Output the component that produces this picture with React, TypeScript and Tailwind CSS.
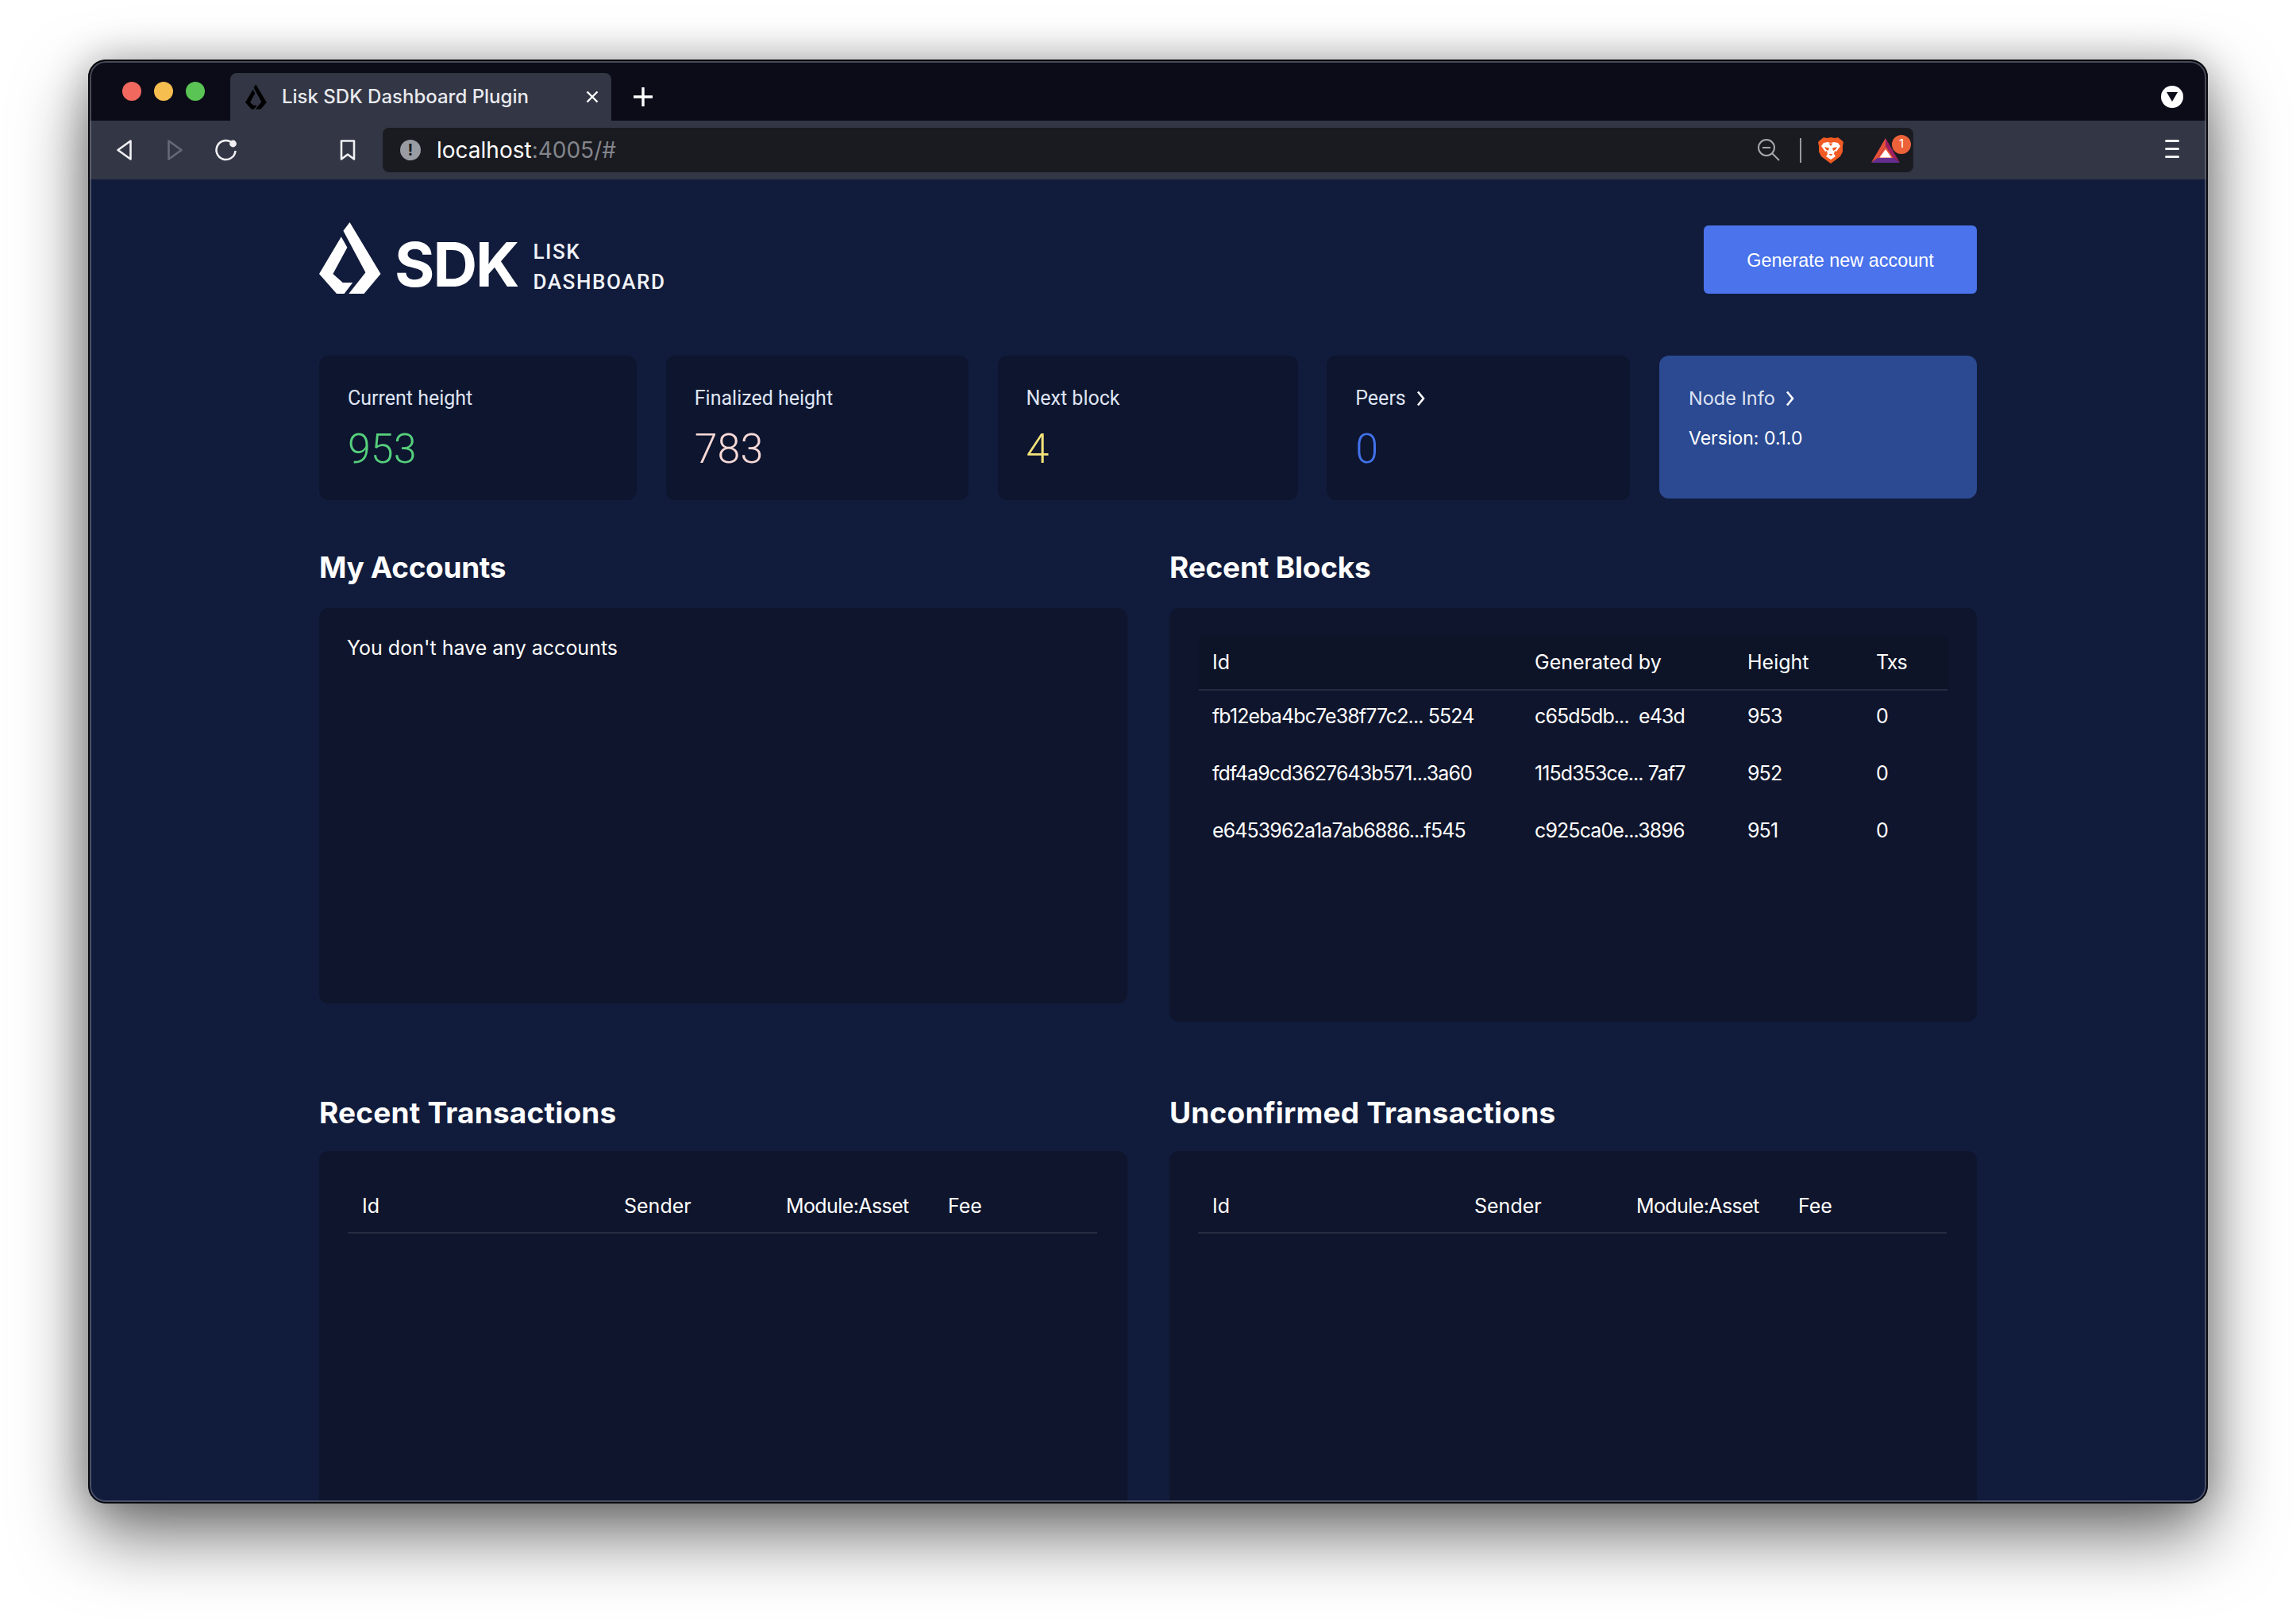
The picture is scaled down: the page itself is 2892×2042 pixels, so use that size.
import React from "react";

const blocks = [
  { id: "fb12eba4bc7e38f77c2... 5524", by: "c65d5db...  e43d", height: "953", txs: "0" },
  { id: "fdf4a9cd3627643b571...3a60", by: "115d353ce... 7af7", height: "952", txs: "0" },
  { id: "e6453962a1a7ab6886...f545", by: "c925ca0e...3896", height: "951", txs: "0" },
];

function LiskMark({ className, fill }: { className: string; fill: string }) {
  return (
    <svg viewBox="0 0 78 90" className={className} fill={fill}>
      <path d="M38.5 0L30.4 10.7L58.4 63.3L37.3 90H56.5L77.5 65Z" />
      <path d="M27.8 18.3L35.4 31.7L17.4 65L29.7 76H42.3L31.6 90H22L0 65Z" />
    </svg>
  );
}

function Chevron() {
  return (
    <svg viewBox="0 0 11 20" className="ml-[13px] h-[20px] w-[11px]" fill="none" stroke="#ffffff" strokeWidth="2.6">
      <path d="M2 1.5L9 10L2 18.5" />
    </svg>
  );
}

function StatCard({ label, value, color, width, arrow }: { label: string; value: string; color: string; width: string; arrow?: boolean }) {
  return (
    <div className={`h-[182px] rounded-[12px] bg-[#0d152f] pl-[36px] pt-[36px] ${width}`}>
      <div className="flex h-[36px] items-center font-['Roboto',sans-serif] text-[25px] text-[#dfe4f3]">
        {label}
        {arrow && <Chevron />}
      </div>
      <div className={`mt-[14px] font-['Roboto',sans-serif] text-[52px] font-light leading-[64px] ${color}`}>{value}</div>
    </div>
  );
}

function TxPanel({ title }: { title: string }) {
  return (
    <div>
      <h2 className="h-[50px] text-[37px] font-bold leading-[50px] tracking-[0.2px] text-white">{title}</h2>
      <div className="mt-[23px] h-[500px] rounded-[12px] bg-[#0f152c] pl-[36px] pr-[38px] pt-[37px]">
        <div className="grid h-[67px] grid-cols-[330px_204px_204px_1fr] items-center border-b-2 border-[#262c40] pl-[18px] text-[25px] text-white">
          <span>Id</span>
          <span>Sender</span>
          <span className="tracking-[-0.6px]">Module:Asset</span>
          <span>Fee</span>
        </div>
      </div>
    </div>
  );
}

export default function App() {
  return (
    <div className="h-[2042px] w-[2892px] overflow-hidden bg-white pl-[111px] pt-[75px] font-['Inter',sans-serif]">
      <div className="relative flex h-[1819px] w-[2670px] flex-col overflow-hidden rounded-[22px] shadow-[0_40px_90px_rgba(0,0,0,0.55),0_0_50px_rgba(0,0,0,0.25)]">
        {/* tab strip */}
        <div className="flex h-[77px] shrink-0 items-end bg-[#0b0c17] pl-[43px]">
          <div className="mb-[25px] flex gap-[16px]">
            <span className="h-[24px] w-[24px] rounded-full bg-[#f1685e]" />
            <span className="h-[24px] w-[24px] rounded-full bg-[#f6bd4f]" />
            <span className="h-[24px] w-[24px] rounded-full bg-[#5ac454]" />
          </div>
          <div className="ml-[32px] flex h-[60px] w-[480px] items-center rounded-t-[8px] bg-[#323645] pl-[19px] pr-[16px]">
            <LiskMark className="h-[32px] w-[27px]" fill="#000000" />
            <span className="ml-[19px] text-[24px] font-medium text-[#e9eaee]">Lisk SDK Dashboard Plugin</span>
            <svg viewBox="0 0 16 16" className="ml-auto h-[16px] w-[16px]" stroke="#ffffff" strokeWidth="2.4">
              <path d="M1.5 1.5L14.5 14.5M14.5 1.5L1.5 14.5" />
            </svg>
          </div>
          <svg viewBox="0 0 24 24" className="mb-[18px] ml-[28px] h-[24px] w-[24px]" stroke="#ffffff" strokeWidth="3.4">
            <path d="M12 0V24M0 12H24" />
          </svg>
          <div className="mb-[16px] ml-auto mr-[31px] flex h-[28px] w-[28px] items-center justify-center rounded-full bg-white">
            <svg viewBox="0 0 14 12" className="h-[12px] w-[14px]" fill="#0b0c17">
              <path d="M0 0H14L7 12Z" />
            </svg>
          </div>
        </div>

        {/* toolbar */}
        <div className="flex h-[74px] shrink-0 items-center bg-[#323645] pl-[36px]">
          <svg viewBox="0 0 19 26" className="h-[26px] w-[19px]" fill="none" stroke="#f0f0f2" strokeWidth="2.6" strokeLinejoin="round">
            <path d="M17.5 1.5V24.5L1.5 13Z" />
          </svg>
          <svg viewBox="0 0 19 26" className="ml-[45px] h-[26px] w-[19px]" fill="none" stroke="#666a77" strokeWidth="2.6" strokeLinejoin="round">
            <path d="M1.5 1.5V24.5L17.5 13Z" />
          </svg>
          <svg viewBox="0 0 28 28" className="ml-[41px] h-[28px] w-[28px]" fill="none" stroke="#f0f0f2" strokeWidth="2.6">
            <path d="M22 5.5A12 12 0 1 0 25.5 15" />
            <circle cx="22.5" cy="6" r="4.4" fill="#f0f0f2" stroke="none" />
          </svg>
          <svg viewBox="0 0 20 26" className="ml-[129px] h-[26px] w-[20px]" fill="none" stroke="#f0f0f2" strokeWidth="2.6" strokeLinejoin="round">
            <path d="M2 1.5H18V24.5L10 18.5L2 24.5Z" />
          </svg>
          <div className="ml-[34px] flex h-[56px] w-[1928px] items-center rounded-[8px] bg-[#1a1b21] pl-[22px] pr-[17px]">
            <span className="flex h-[26px] w-[26px] items-center justify-center rounded-full bg-[#999da3] text-[20px] font-bold leading-none text-[#1a1b21]">!</span>
            <span className="ml-[20px] text-[28px] text-white">
              localhost<span className="text-[#83858b]">:4005/#</span>
            </span>
            <svg viewBox="0 0 28 28" className="ml-auto h-[28px] w-[28px]" fill="none" stroke="#a6a7ab" strokeWidth="2">
              <circle cx="11" cy="11" r="10" />
              <path d="M18 18L27 27M6 11H16" />
            </svg>
            <span className="ml-[25px] h-[31px] w-[2px] bg-[#9a9a9e]" />
            <svg viewBox="0 0 32 34" className="ml-[21px] h-[34px] w-[32px]">
              <path fill="#f15a22" d="M7 1L11 2L16 1L21 2L25 1L30 5L32 7L31 12L31 19L28 25L16 34L4 25L1 19L1 12L0 7L2 5Z" />
              <path fill="#ffffff" d="M7 8L12 7L16 8L20 7L25 8L28 12L23 19L21 18L20 22L22 25L16 29L10 25L12 22L11 18L9 19L4 12Z" />
              <path fill="#f15a22" d="M8 13L14 14.5L13 18L10 16.5ZM24 13L18 14.5L19 18L22 16.5ZM13.5 8.5H18.5L16 12ZM13.5 22H18.5L16 24.5Z" />
            </svg>
            <div className="relative ml-[35px] h-[31px] w-[36px]">
              <svg viewBox="0 0 36 31" className="h-[31px] w-[36px]">
                <polygon fill="#e8503a" points="18,0 0,31 8,25 18,10" />
                <polygon fill="#9e1f63" points="18,0 36,31 28,25 18,10" />
                <polygon fill="#e8503a" points="18,10 8,25 28,25" />
                <polygon fill="#662d91" points="0,31 36,31 28,25 8,25" />
                <polygon fill="#ffffff" points="18,14 10.5,24.5 25.5,24.5" />
              </svg>
              <span className="absolute left-[26px] top-[-4px] flex h-[24px] w-[24px] items-center justify-center rounded-full bg-[#ed6239] text-[15px] text-white">1</span>
            </div>
          </div>
          <div className="mb-[3px] ml-[317px] flex w-[18px] flex-col gap-[7px]">
            <span className="h-[3px] rounded-full bg-[#f0f0f2]" />
            <span className="h-[3px] rounded-full bg-[#f0f0f2]" />
            <span className="h-[3px] rounded-full bg-[#f0f0f2]" />
          </div>
        </div>

        {/* page */}
        <div className="flex-1 overflow-hidden bg-[#111c3c] pl-[291px] pr-[291px] pt-[54px]">
          <div className="flex h-[90px] items-start justify-between">
            <div className="flex">
              <LiskMark className="h-[90px] w-[78px]" fill="#ffffff" />
              <span className="ml-[17px] mt-[19px] text-[77px] font-bold leading-[68px] tracking-[-2px] text-white">SDK</span>
              <div className="ml-[19px] mt-[18px] font-['Roboto',sans-serif] text-[26px] font-medium leading-[38px] tracking-[1.6px] text-[#f1f3f8]">
                <div>LISK</div>
                <div>DASHBOARD</div>
              </div>
            </div>
            <button className="mt-[4px] h-[86px] w-[344px] rounded-[6px] bg-[#4a73ec] pt-[4px] font-['Liberation_Sans',sans-serif] text-[23.4px] text-white">
              Generate new account
            </button>
          </div>

          <div className="mt-[78px] flex items-start justify-between">
            <StatCard label="Current height" value="953" color="text-[#56d07c]" width="w-[400px]" />
            <StatCard label="Finalized height" value="783" color="text-[#f8d9d6]" width="w-[381px]" />
            <StatCard label="Next block" value="4" color="text-[#f2e27a]" width="w-[378px]" />
            <StatCard label="Peers" value="0" color="text-[#4272ea]" width="w-[382px]" arrow />
            <div className="h-[180px] w-[400px] rounded-[12px] bg-[#2b4a92] pl-[37px] pt-[36px]">
              <div className="flex h-[36px] items-center text-[23.5px] text-[#dfe4f3]">
                Node Info
                <Chevron />
              </div>
              <div className="mt-[14px] text-[23px] leading-[36px] text-white">Version: 0.1.0</div>
            </div>
          </div>

          <div className="mt-[60px] grid grid-cols-[1018px_1017px] gap-x-[53px]">
            <div>
              <h2 className="h-[50px] text-[37px] font-bold leading-[50px] tracking-[-0.35px] text-white">My Accounts</h2>
              <div className="mt-[26px] h-[498px] rounded-[12px] bg-[#0f152c] pl-[35px] pt-[30px] text-[25px] leading-[40px] text-white">
                You don't have any accounts
              </div>
            </div>
            <div>
              <h2 className="h-[50px] text-[37px] font-bold leading-[50px] tracking-[-0.2px] text-white">Recent Blocks</h2>
              <div className="mt-[26px] h-[521px] rounded-[12px] bg-[#0f152c] px-[37px] pt-[36px]">
                <div className="grid h-[68px] grid-cols-[406px_268px_162px_1fr] items-center border-b-2 border-[#262c40] bg-[#0d1428] pl-[17px] text-[25px] text-white">
                  <span>Id</span>
                  <span>Generated by</span>
                  <span>Height</span>
                  <span className="tracking-[-0.8px]">Txs</span>
                </div>
                <div className="pt-[14px]">
                  {blocks.map((b) => (
                    <div key={b.height} className="grid h-[72px] grid-cols-[406px_268px_162px_1fr] pl-[17px] text-[25px] leading-[36px] tracking-[-0.9px] text-white">
                      <span className="whitespace-pre">{b.id}</span>
                      <span className="whitespace-pre">{b.by}</span>
                      <span>{b.height}</span>
                      <span>{b.txs}</span>
                    </div>
                  ))}
                </div>
              </div>
            </div>
          </div>

          <div className="mt-[90px] grid grid-cols-[1018px_1017px] gap-x-[53px]">
            <TxPanel title="Recent Transactions" />
            <TxPanel title="Unconfirmed Transactions" />
          </div>
        </div>

        {/* window edge */}
        <div className="pointer-events-none absolute inset-0 rounded-[22px] border-2 border-[#0a0a0e] shadow-[inset_0_0_0_2px_rgba(120,124,140,0.55)]" />
      </div>
    </div>
  );
}
